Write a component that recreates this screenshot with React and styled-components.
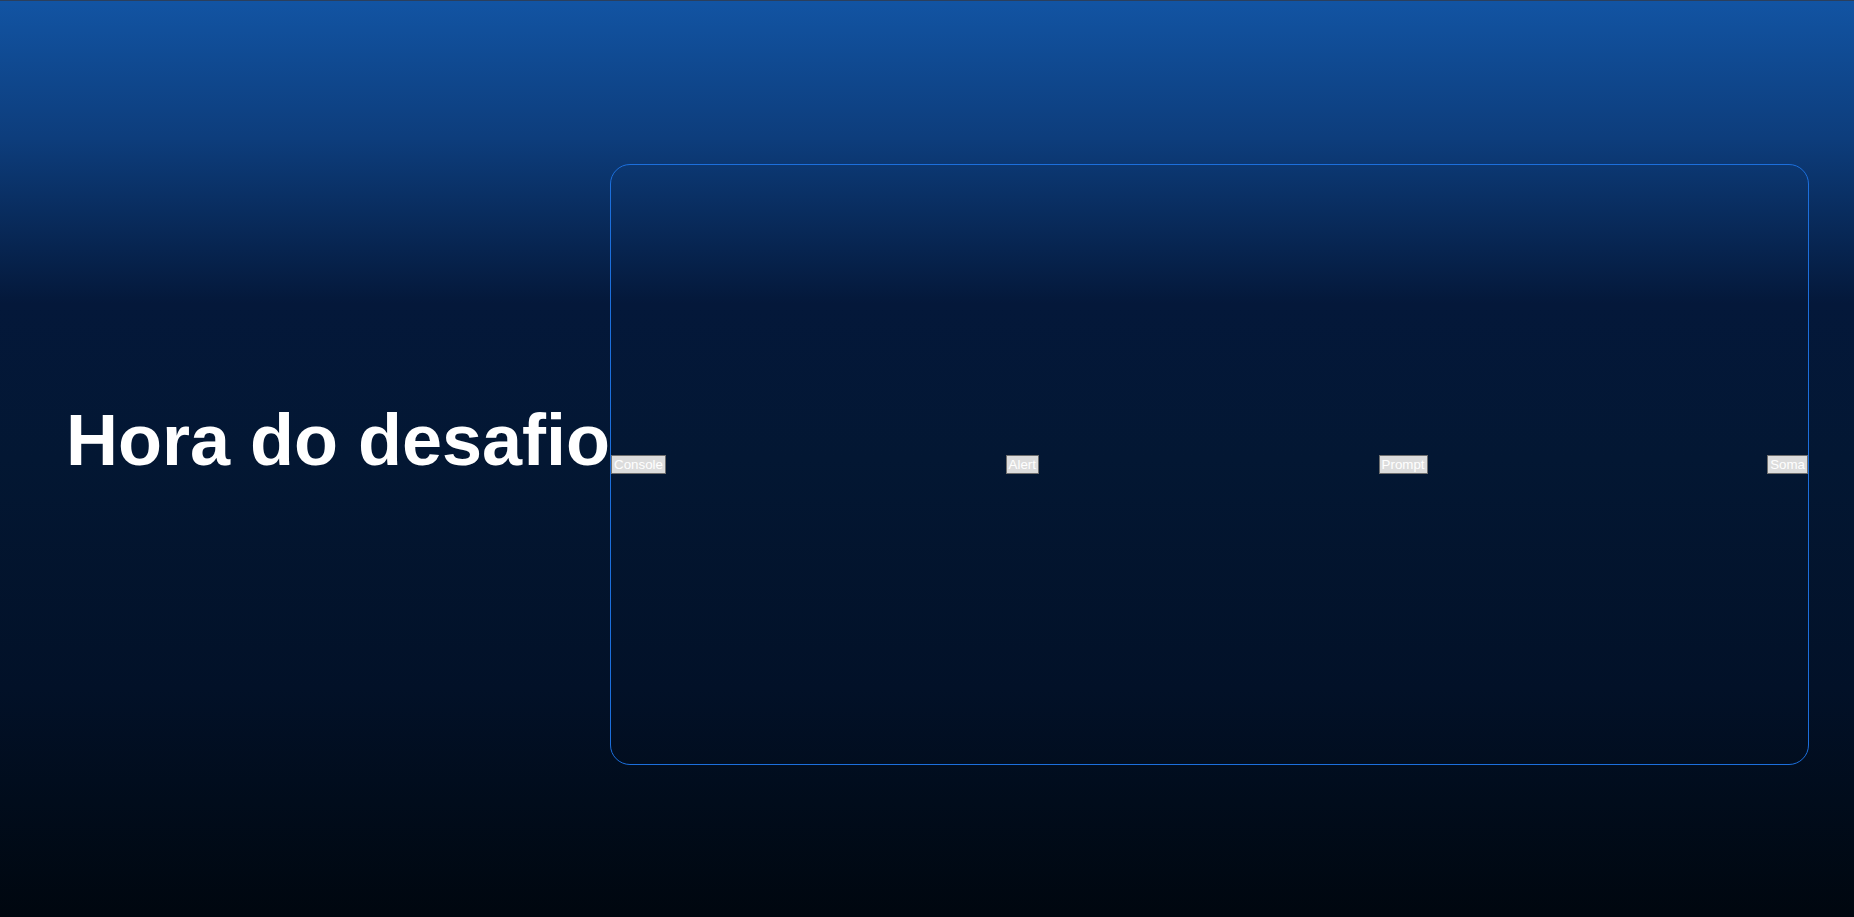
import React from 'react';
import styled, { createGlobalStyle } from 'styled-components';

const GlobalStyle = createGlobalStyle`
    html, body {
        margin: 0;
        padding: 0;
    }
    body {
        font-family: "Liberation Sans", Arial, sans-serif;
    }
`

const Page = styled.main`
    width: 100vw;
    height: 100vh;
    box-sizing: border-box;
    padding: 10px 45px 0 66px;
    display: flex;
    align-items: center;
    border-top: 1px solid #2b3f5c;
    background: linear-gradient(
        to bottom,
        #1254a3 0%,
        #0d3d7c 15%,
        #04183a 33%,
        #031733 50%,
        #021128 75%,
        #00070f 100%
    );
    overflow: hidden;
`

const Title = styled.h1`
    margin: 0 0 48px;
    font-size: 72px;
    font-weight: 700;
    color: #ffffff;
    white-space: nowrap;
`

const Board = styled.section`
    width: 1200px;
    height: 601px;
    box-sizing: border-box;
    border: 1px solid #1c6fdc;
    border-radius: 20px;
    display: flex;
    align-items: center;
    justify-content: space-between;
`

const ActionButton = styled.button`
    font-family: "Liberation Sans", Arial, sans-serif;
    font-size: 13.33px;
    line-height: 15px;
    color: #ffffff;
    background: #dcdcdc;
    border: 1px solid #6e6e6e;
    padding: 1px 2px;
    margin: 0;
    cursor: pointer;
`

const actions = ['Console', 'Alert', 'Prompt', 'Soma']

export default function App() {
    return (
        <>
            <GlobalStyle />
            <Page>
                <Title>Hora do desafio</Title>
                <Board>
                    {actions.map(label => (
                        <ActionButton key={label}>{label}</ActionButton>
                    ))}
                </Board>
            </Page>
        </>
    )
}
